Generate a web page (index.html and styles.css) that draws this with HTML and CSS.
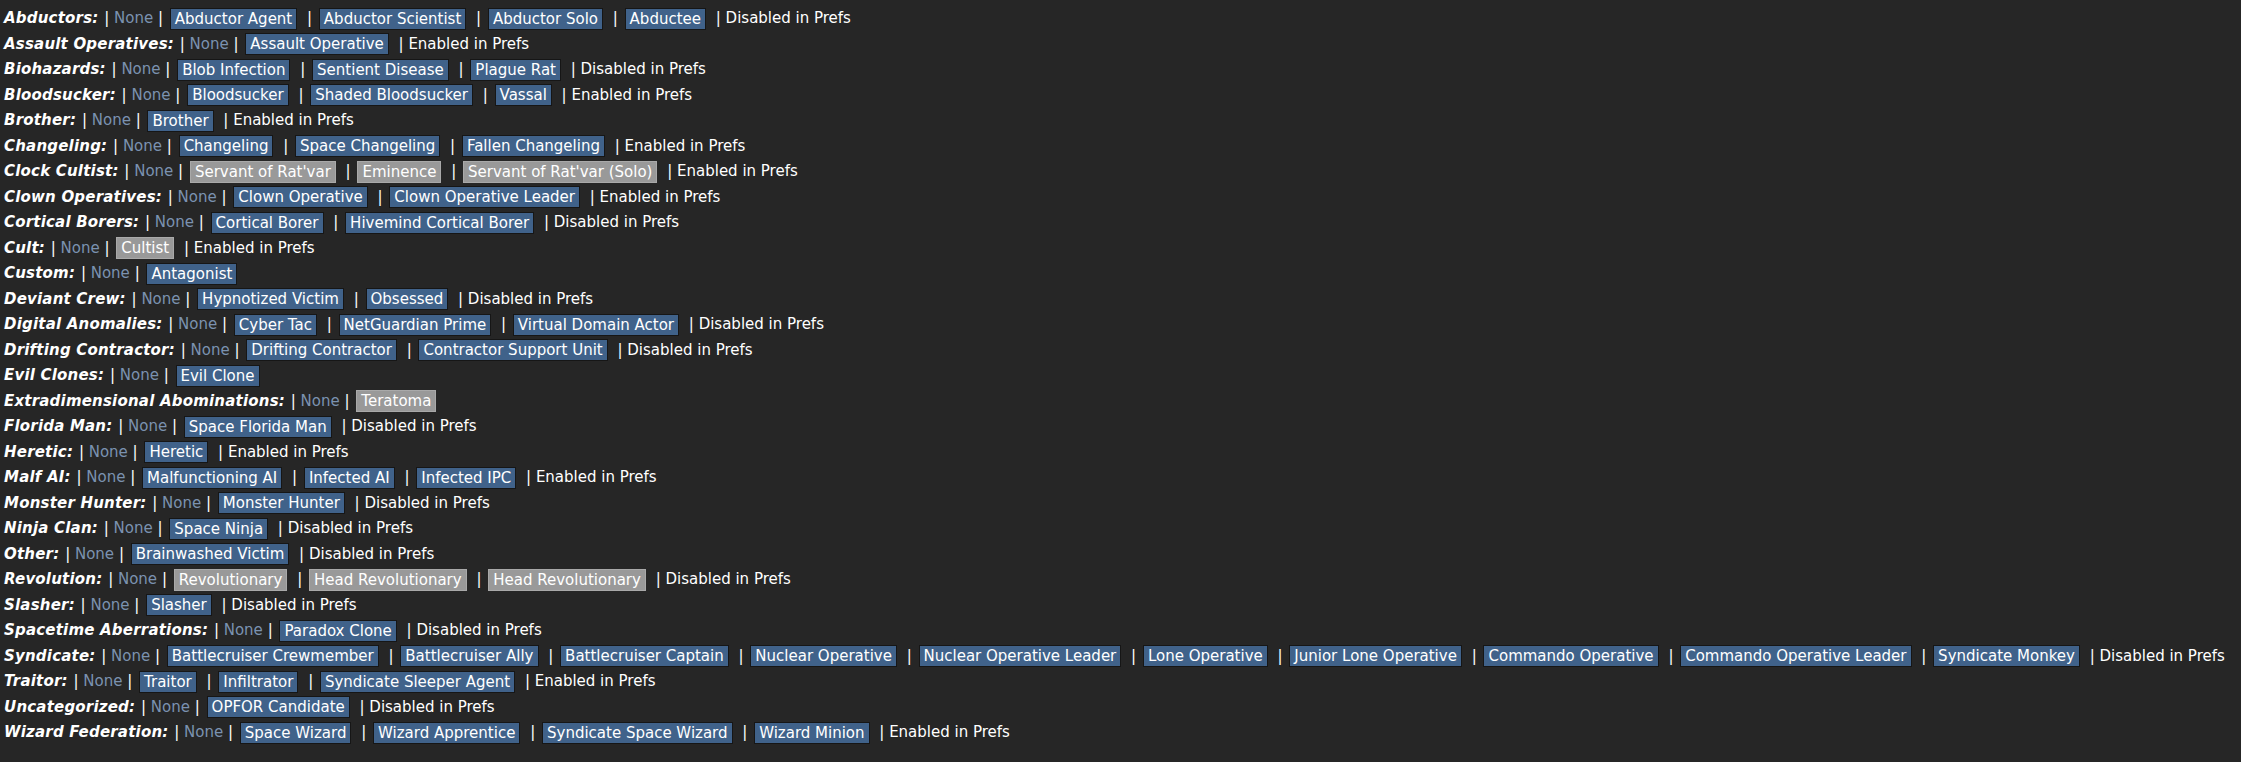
FILE: index.html
```html
<!DOCTYPE html>
<html>
<head>
<meta charset="utf-8">
<link rel="stylesheet" href="styles.css">
</head>
<body>
<div class="list">
<div class="row"><b class="cat">Abductors:</b> | <span class="none">None</span> | <span class="btn">Abductor Agent</span> | <span class="btn">Abductor Scientist</span> | <span class="btn">Abductor Solo</span> | <span class="btn">Abductee</span> | Disabled in Prefs</div>
<div class="row"><b class="cat">Assault Operatives:</b> | <span class="none">None</span> | <span class="btn">Assault Operative</span> | Enabled in Prefs</div>
<div class="row"><b class="cat">Biohazards:</b> | <span class="none">None</span> | <span class="btn">Blob Infection</span> | <span class="btn">Sentient Disease</span> | <span class="btn">Plague Rat</span> | Disabled in Prefs</div>
<div class="row"><b class="cat">Bloodsucker:</b> | <span class="none">None</span> | <span class="btn">Bloodsucker</span> | <span class="btn">Shaded Bloodsucker</span> | <span class="btn">Vassal</span> | Enabled in Prefs</div>
<div class="row"><b class="cat">Brother:</b> | <span class="none">None</span> | <span class="btn">Brother</span> | Enabled in Prefs</div>
<div class="row"><b class="cat">Changeling:</b> | <span class="none">None</span> | <span class="btn">Changeling</span> | <span class="btn">Space Changeling</span> | <span class="btn">Fallen Changeling</span> | Enabled in Prefs</div>
<div class="row"><b class="cat">Clock Cultist:</b> | <span class="none">None</span> | <span class="btn off">Servant of Rat'var</span> | <span class="btn off">Eminence</span> | <span class="btn off">Servant of Rat'var (Solo)</span> | Enabled in Prefs</div>
<div class="row"><b class="cat">Clown Operatives:</b> | <span class="none">None</span> | <span class="btn">Clown Operative</span> | <span class="btn">Clown Operative Leader</span> | Enabled in Prefs</div>
<div class="row"><b class="cat">Cortical Borers:</b> | <span class="none">None</span> | <span class="btn">Cortical Borer</span> | <span class="btn">Hivemind Cortical Borer</span> | Disabled in Prefs</div>
<div class="row"><b class="cat">Cult:</b> | <span class="none">None</span> | <span class="btn off">Cultist</span> | Enabled in Prefs</div>
<div class="row"><b class="cat">Custom:</b> | <span class="none">None</span> | <span class="btn">Antagonist</span></div>
<div class="row"><b class="cat">Deviant Crew:</b> | <span class="none">None</span> | <span class="btn">Hypnotized Victim</span> | <span class="btn">Obsessed</span> | Disabled in Prefs</div>
<div class="row"><b class="cat">Digital Anomalies:</b> | <span class="none">None</span> | <span class="btn">Cyber Tac</span> | <span class="btn">NetGuardian Prime</span> | <span class="btn">Virtual Domain Actor</span> | Disabled in Prefs</div>
<div class="row"><b class="cat">Drifting Contractor:</b> | <span class="none">None</span> | <span class="btn">Drifting Contractor</span> | <span class="btn">Contractor Support Unit</span> | Disabled in Prefs</div>
<div class="row"><b class="cat">Evil Clones:</b> | <span class="none">None</span> | <span class="btn">Evil Clone</span></div>
<div class="row"><b class="cat">Extradimensional Abominations:</b> | <span class="none">None</span> | <span class="btn off">Teratoma</span></div>
<div class="row"><b class="cat">Florida Man:</b> | <span class="none">None</span> | <span class="btn">Space Florida Man</span> | Disabled in Prefs</div>
<div class="row"><b class="cat">Heretic:</b> | <span class="none">None</span> | <span class="btn">Heretic</span> | Enabled in Prefs</div>
<div class="row"><b class="cat">Malf AI:</b> | <span class="none">None</span> | <span class="btn">Malfunctioning AI</span> | <span class="btn">Infected AI</span> | <span class="btn">Infected IPC</span> | Enabled in Prefs</div>
<div class="row"><b class="cat">Monster Hunter:</b> | <span class="none">None</span> | <span class="btn">Monster Hunter</span> | Disabled in Prefs</div>
<div class="row"><b class="cat">Ninja Clan:</b> | <span class="none">None</span> | <span class="btn">Space Ninja</span> | Disabled in Prefs</div>
<div class="row"><b class="cat">Other:</b> | <span class="none">None</span> | <span class="btn">Brainwashed Victim</span> | Disabled in Prefs</div>
<div class="row"><b class="cat">Revolution:</b> | <span class="none">None</span> | <span class="btn off">Revolutionary</span> | <span class="btn off">Head Revolutionary</span> | <span class="btn off">Head Revolutionary</span> | Disabled in Prefs</div>
<div class="row"><b class="cat">Slasher:</b> | <span class="none">None</span> | <span class="btn">Slasher</span> | Disabled in Prefs</div>
<div class="row"><b class="cat">Spacetime Aberrations:</b> | <span class="none">None</span> | <span class="btn">Paradox Clone</span> | Disabled in Prefs</div>
<div class="row"><b class="cat">Syndicate:</b> | <span class="none">None</span> | <span class="btn">Battlecruiser Crewmember</span> | <span class="btn">Battlecruiser Ally</span> | <span class="btn">Battlecruiser Captain</span> | <span class="btn">Nuclear Operative</span> | <span class="btn">Nuclear Operative Leader</span> | <span class="btn">Lone Operative</span> | <span class="btn">Junior Lone Operative</span> | <span class="btn">Commando Operative</span> | <span class="btn">Commando Operative Leader</span> | <span class="btn">Syndicate Monkey</span> | Disabled in Prefs</div>
<div class="row"><b class="cat">Traitor:</b> | <span class="none">None</span> | <span class="btn">Traitor</span> | <span class="btn">Infiltrator</span> | <span class="btn">Syndicate Sleeper Agent</span> | Enabled in Prefs</div>
<div class="row"><b class="cat">Uncategorized:</b> | <span class="none">None</span> | <span class="btn">OPFOR Candidate</span> | Disabled in Prefs</div>
<div class="row"><b class="cat">Wizard Federation:</b> | <span class="none">None</span> | <span class="btn">Space Wizard</span> | <span class="btn">Wizard Apprentice</span> | <span class="btn">Syndicate Space Wizard</span> | <span class="btn">Wizard Minion</span> | Enabled in Prefs</div>
</div>
</body>
</html>
```
FILE: styles.css
```css
html, body {
  margin: 0;
  padding: 0;
  background: #262626;
}
body {
  font-family: "DejaVu Sans", Verdana, sans-serif;
  font-size: 15px;
  color: #ffffff;
}
.list {
  padding: 6px 0 0 4px;
}
.row {
  height: 25.5px;
  line-height: 25.5px;
  white-space: nowrap;
}
.cat {
  font-weight: bold;
  font-style: italic;
  letter-spacing: 0.2px;
  margin-right: 1px;
}
.none {
  color: #7b92b0;
}
.btn {
  display: inline-block;
  line-height: 20px;
  padding: 0 4px;
  margin: 0 5px 0 2px;
  background: #40628a;
  border: 1px solid #161616;
  color: #ffffff;
  vertical-align: middle;
}
.btn.off {
  background: #999999;
  border-color: #a9a9a9;
}
```
